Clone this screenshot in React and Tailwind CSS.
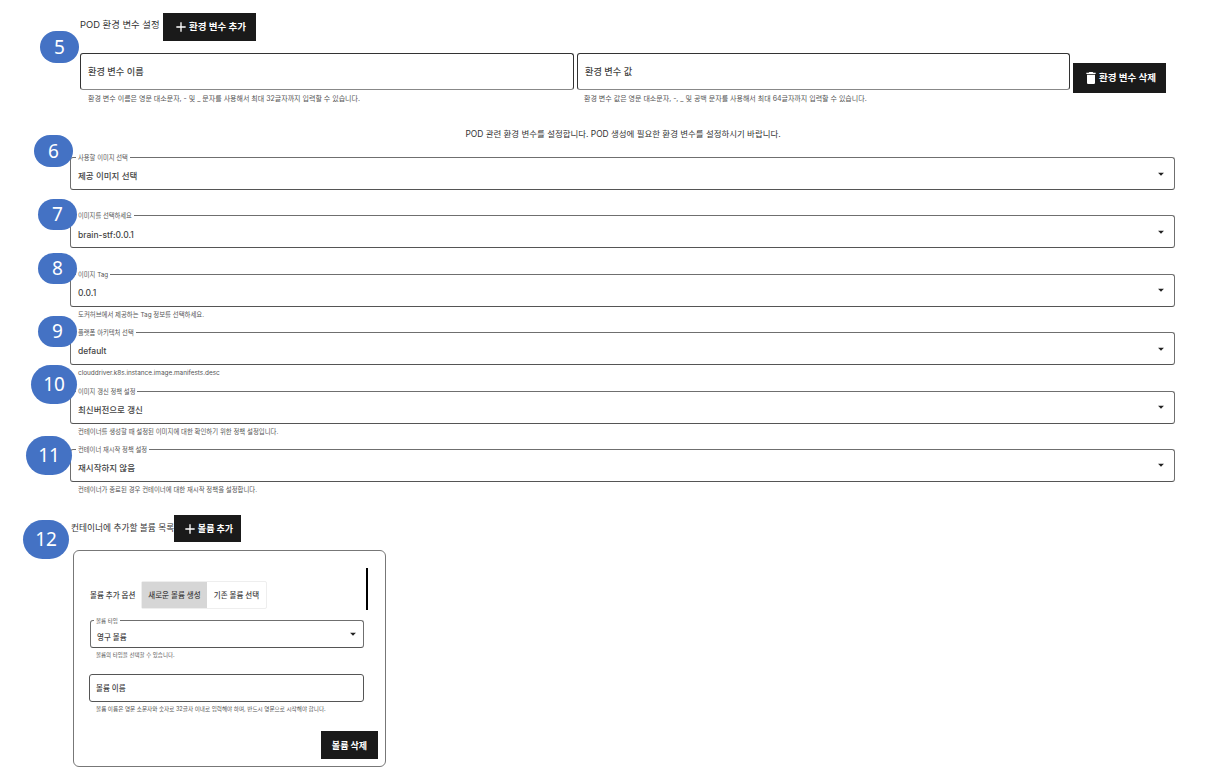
import React from 'react';

const AddIcon = ({ className }) => (
    <svg viewBox="0 0 24 24" fill="currentColor" className={className}>
        <path d="M19 13h-6v6h-2v-6H5v-2h6V5h2v6h6v2z" />
    </svg>
);

const DeleteIcon = ({ className }) => (
    <svg viewBox="0 0 24 24" fill="currentColor" className={className}>
        <path d="M6 19c0 1.1.9 2 2 2h8c1.1 0 2-.9 2-2V7H6v12zM19 4h-3.5l-1-1h-5l-1 1H5v2h14V4z" />
    </svg>
);

const Caret = () => (
    <svg viewBox="0 0 24 24" fill="currentColor" className="w-[14px] h-[14px] text-[#222]">
        <path d="M7 10l5 5 5-5z" />
    </svg>
);

const DarkButton = ({ className = '', children }) => (
    <button className={`bg-[#1a1a1a] text-white font-bold text-[9.5px] flex items-center justify-center shrink-0 ${className}`}>
        {children}
    </button>
);

const Select = ({ label, value, small = false, className = '' }) => (
    <div className={`relative flex items-center justify-between border border-[#6f6f6f] border-b-[#555] rounded-[3px] ${small ? 'pl-[6px] pr-[3px]' : 'pl-[7px] pr-[6px]'} ${className}`}>
        <span className={`absolute -top-[4px] bg-white px-[2px] leading-[9px] text-[#555] ${small ? 'left-[3px] text-[5.5px]' : 'left-[5px] text-[6.3px]'}`}>{label}</span>
        <span className={`font-medium text-[#444] pt-[6px] ${small ? 'text-[7.5px]' : 'text-[8.5px]'}`}>{value}</span>
        <Caret />
    </div>
);

const fields = [
    { label: '사용할 이미지 선택', value: '제공 이미지 선택' },
    { label: '이미지를 선택하세요', value: 'brain-stf:0.0.1' },
    { label: '이미지 Tag', value: '0.0.1', help: '도커허브에서 제공하는 Tag 정보를 선택하세요.' },
    { label: '플랫폼 아키텍처 선택', value: 'default', help: 'clouddriver.k8s.instance.image.manifests.desc' },
    { label: '이미지 갱신 정책 설정', value: '최신버전으로 갱신', help: '컨테이너를 생성할 때 설정된 이미지에 대한 확인하기 위한 정책 설정입니다.' },
    { label: '컨테이너 재시작 정책 설정', value: '재시작하지 않음', help: '컨테이너가 종료된 경우 컨테이너에 대한 재시작 정책을 설정합니다.' },
];

const markers = [
    { n: 5, cls: 'left-[40px] top-[31px] w-[39px] h-[32px]' },
    { n: 6, cls: 'left-[34px] top-[135px] w-[39px] h-[32px]' },
    { n: 7, cls: 'left-[38px] top-[199px] w-[39px] h-[31px]' },
    { n: 8, cls: 'left-[38px] top-[253px] w-[39px] h-[31px]' },
    { n: 9, cls: 'left-[38px] top-[316px] w-[39px] h-[31px]' },
    { n: 10, cls: 'left-[31px] top-[365px] w-[46px] h-[39px]' },
    { n: 11, cls: 'left-[26px] top-[436px] w-[46px] h-[39px]' },
    { n: 12, cls: 'left-[23px] top-[520px] w-[46px] h-[39px]' },
];

const App = () => {
    return (
        <div className="relative w-[1221px] h-[774px] overflow-hidden bg-white text-[#222] pt-[13px] pl-[70px] font-['Inter','Noto_Sans_CJK_KR',sans-serif]">
            <div className="w-[1105px]">
                <div className="flex items-center h-[28px] pl-[10px] gap-[3px] -mb-[1px]">
                    <span className="text-[9.4px] text-[#333] w-[80px] pb-[3px] whitespace-nowrap">POD 환경 변수 설정</span>
                    <DarkButton className="w-[93px] h-[28px]">
                        <AddIcon className="w-[16px] h-[16px]" /> 환경 변수 추가
                    </DarkButton>
                </div>

                <div className="flex pl-[10px] gap-[3px] mt-[13px] h-[41px]">
                    <div className="w-[494px]">
                        <div className="h-[37px] flex items-center border border-[#333] border-b-[#888] rounded-[3px] pl-[7px] text-[9.2px] font-medium text-[#444]">환경 변수 이름</div>
                        <p className="text-[7px] leading-[9px] text-[#555] pl-[8px] mt-[4px] whitespace-nowrap">환경 변수 이름은 영문 대소문자, - 및 _ 문자를 사용해서 최대 32글자까지 입력할 수 있습니다.</p>
                    </div>
                    <div className="w-[493px]">
                        <div className="h-[37px] flex items-center border border-[#333] border-b-[#888] rounded-[3px] pl-[7px] text-[9.2px] font-medium text-[#444]">환경 변수 값</div>
                        <p className="text-[7px] leading-[9px] text-[#555] pl-[7px] mt-[4px] whitespace-nowrap">환경 변수 값은 영문 대소문자, -, _ 및 공백 문자를 사용해서 최대 64글자까지 입력할 수 있습니다.</p>
                    </div>
                    <DarkButton className="w-[93px] h-[30px] mt-[10px]">
                        <DeleteIcon className="w-[16px] h-[16px]" /> 환경 변수 삭제
                    </DarkButton>
                </div>

                <p className="text-[8.45px] leading-[12px] text-[#333] text-center mt-[34px] pl-[1px]">POD 관련 환경 변수를 설정합니다. POD 생성에 필요한 환경 변수를 설정하시기 바랍니다.</p>

                <div className="mt-[17px]">
                    {fields.map((f) => (
                        <div key={f.label} className="h-[58.4px]">
                            <Select label={f.label} value={f.value} className="h-[33px]" />
                            {f.help && <p className="text-[6.4px] leading-[9px] text-[#555] pl-[8px] mt-[4px] whitespace-nowrap">{f.help}</p>}
                        </div>
                    ))}
                </div>

                <div className="flex items-center h-[27px] mt-[8px] pl-[1px] gap-[2px]">
                    <span className="text-[8.7px] text-[#333] w-[101px] whitespace-nowrap">컨테이너에 추가할 볼륨 목록</span>
                    <DarkButton className="w-[67px] h-[27px] !text-[9px]">
                        <AddIcon className="w-[16px] h-[16px]" /> 볼륨 추가
                    </DarkButton>
                </div>

                <div className="relative w-[313px] h-[217px] ml-[3px] mt-[8px] border border-[#777] rounded-[6px] pt-[30px] pl-[16px]">
                    <span className="absolute left-[292px] top-[17px] w-[2px] h-[42px] bg-black" />
                    <div className="flex items-center">
                        <span className="text-[7.5px] font-medium text-[#444] w-[51px]">볼륨 추가 옵션</span>
                        <div className="flex h-[28px] w-[126px] border border-[#eee] rounded-[2px] text-[7.5px] font-medium text-[#444]">
                            <span className="w-[66px] flex items-center justify-center bg-[#d6d6d6]">새로운 볼륨 생성</span>
                            <span className="w-[60px] flex items-center justify-center">기존 볼륨 선택</span>
                        </div>
                    </div>

                    <Select small label="볼륨 타입" value="영구 볼륨" className="h-[28px] w-[274px] mt-[11px]" />
                    <p className="text-[5.5px] leading-[8px] text-[#555] pl-[6px] mt-[3px]">볼륨의 타입을 선택할 수 있습니다.</p>

                    <div className="h-[28px] w-[275px] -ml-[1px] mt-[15px] flex items-center border border-[#555] rounded-[3px] pl-[6px] text-[7.5px] font-medium text-[#444]">볼륨 이름</div>
                    <p className="text-[5.6px] leading-[8px] text-[#555] pl-[6px] mt-[3px] whitespace-nowrap">볼륨 이름은 영문 소문자와 숫자로 32글자 이내로 입력해야 하며, 반드시 영문으로 시작해야 합니다.</p>

                    <div className="flex justify-end pr-[7px] mt-[18px]">
                        <DarkButton className="w-[57px] h-[28px] !text-[9px]">볼륨 삭제</DarkButton>
                    </div>
                </div>
            </div>

            {markers.map((m) => (
                <div key={m.n} className={`absolute rounded-full bg-[#4472c4] text-white text-[19px] flex items-center justify-center font-['Noto_Sans',sans-serif] ${m.cls}`}>
                    {m.n}
                </div>
            ))}
        </div>
    );
};

export default App;
